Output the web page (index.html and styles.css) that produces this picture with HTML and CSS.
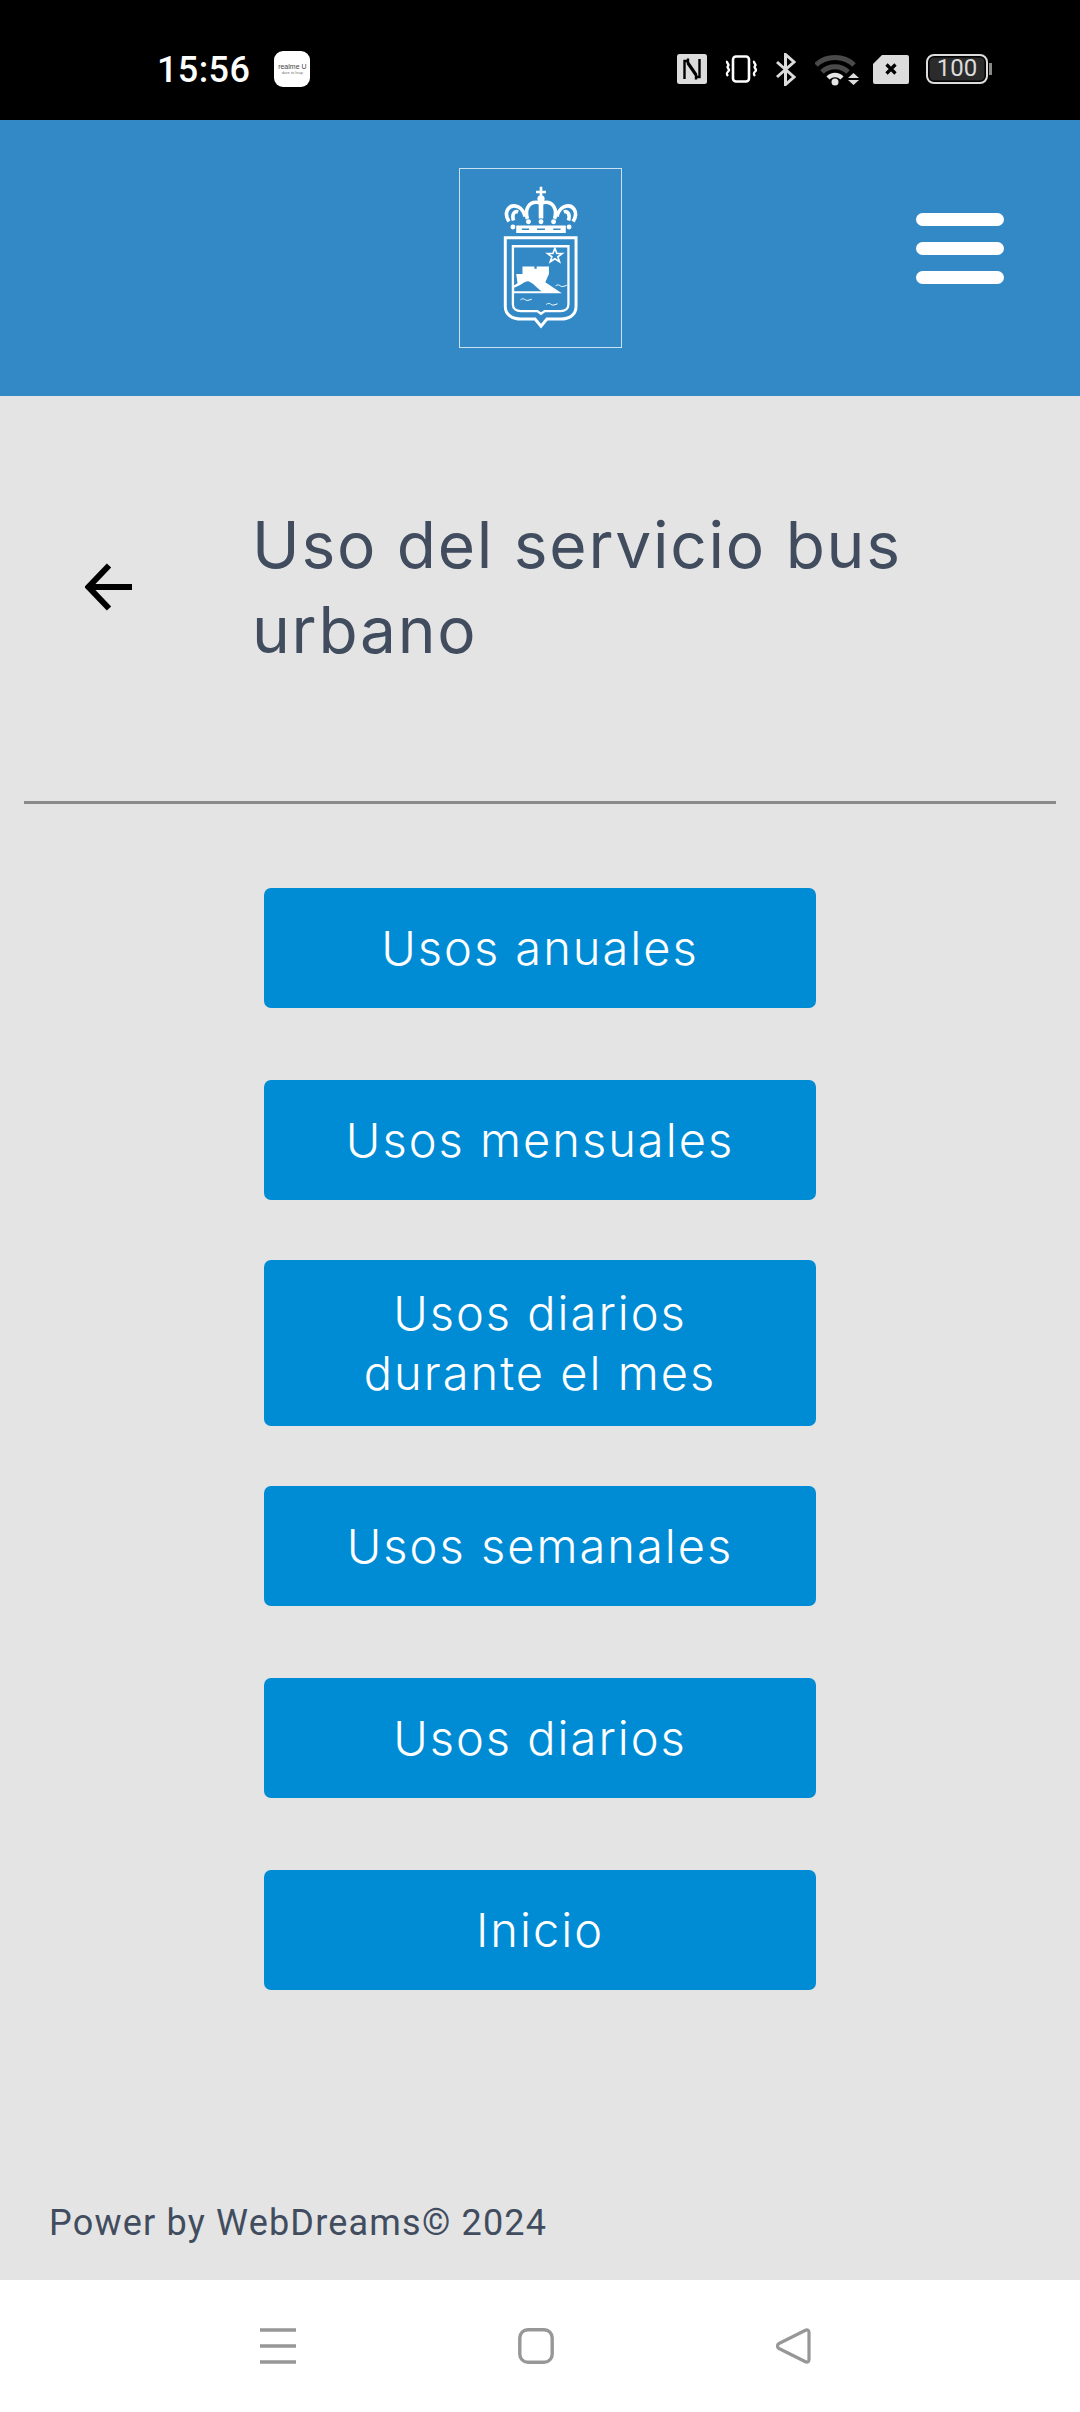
FILE: index.html
```html
<!DOCTYPE html>
<html lang="es">
<head>
<meta charset="utf-8">
<title>Uso del servicio bus urbano</title>
<link rel="stylesheet" href="styles.css">
</head>
<body>
<div class="app">
  <div class="statusbar">
    <div class="status-left">
      <span class="time">15:56</span>
      <span class="app-badge"><span class="badge-name">realme U</span><span class="badge-sub">dare to leap</span></span>
    </div>
    <div class="status-right">
      <svg class="s-nfc" width="30" height="30" viewBox="0 0 30 30"><rect width="30" height="30" rx="2.500" fill="#dcdcdc"/><path d="M7.500 25V7h2.500l9 13v5.500M22.500 5v18h-2.500l-9-13V4.500" fill="none" stroke="#000" stroke-width="2.400"/></svg>
      <svg class="s-vib" width="32" height="28" viewBox="0 0 32 28"><rect x="8" y="1.500" width="16" height="25" rx="3" fill="none" stroke="#fff" stroke-width="2.600"/><path d="M2.500 6c-2 2 2.500 3 .5 5s2.500 3 .5 5-2.500 3-.5 5M29.500 6c-2 2 2.500 3 .5 5s2.500 3 .5 5-2.500 3-.5 5" fill="none" stroke="#fff" stroke-width="2.400"/></svg>
      <svg class="s-bt" width="21" height="33" viewBox="0 0 21 33"><path d="M2 9l17 15-8.500 7.500V1.500L19 9 2 24" fill="none" stroke="#dcdcdc" stroke-width="3"/></svg>
      <svg class="s-wifi" width="45" height="33" viewBox="0 0 45 33"><path d="M1 12C11 2 29 2 39 12" fill="none" stroke="#4a4a4a" stroke-width="5"/><path d="M7 19c7-7 19-7 26 0" fill="none" stroke="#4a4a4a" stroke-width="5"/><path d="M13 25c4-4 10-4 14 0" fill="none" stroke="#e6e6e6" stroke-width="4.500"/><circle cx="20" cy="29" r="3.500" fill="#e6e6e6"/><path d="M33 25l5.500-5 5.500 5zM33 27h11l-5.500 5z" fill="#dcdcdc"/></svg>
      <svg class="s-sim" width="36" height="29" viewBox="0 0 36 29"><path d="M9 0h25a2 2 0 0 1 2 2v25a2 2 0 0 1-2 2H2a2 2 0 0 1-2-2V9z" fill="#dcdcdc"/><path d="M13.500 9.500l9 9M22.500 9.500l-9 9" stroke="#000" stroke-width="3.200"/></svg>
      <span class="battery"><span class="battery-level">100</span></span>
    </div>
  </div>

  <header class="topbar">
    <div class="logo">
      <svg width="161" height="178" viewBox="0 0 487 537">
        <g transform="translate(-58 -55)">
          <path d="M303 108v30M288 124h30" stroke="#fff" stroke-width="8" fill="none"/>
          <circle cx="303" cy="145" r="11" fill="#fff"/>
          <path d="M206 213c-18-28 0-56 28-44 14 6 20 22 20 30M220 210c-6-18 2-30 14-26" fill="none" stroke="#fff" stroke-width="11"/>
          <path d="M400 213c18-28 0-56-28-44-14 6-20 22-20 30M386 210c6-18-2-30-14-26" fill="none" stroke="#fff" stroke-width="11"/>
          <path d="M262 205c-10-30 6-50 26-50 8 0 15 4 15 4s7-4 15-4c20 0 36 20 26 50" fill="none" stroke="#fff" stroke-width="11"/>
          <path d="M296 160h14v44h-14z" fill="#fff"/>
          <circle cx="265" cy="214" r="7.500" fill="#fff"/><circle cx="303" cy="214" r="7.500" fill="#fff"/><circle cx="341" cy="214" r="7.500" fill="#fff"/>
          <circle cx="218" cy="230" r="7.500" fill="#fff"/><circle cx="388" cy="230" r="7.500" fill="#fff"/>
          <path d="M228 225h150v23H228z" fill="#fff"/>
          <path d="M245 234h22v5h-22zM291 234h24v5h-24zM340 234h22v5h-22z" fill="#3389c6"/>
          <path d="M195 262h214v208c0 26-22 38-46 38h-42l-18 22-18-22h-42c-26 0-48-12-48-38z" fill="none" stroke="#fff" stroke-width="9"/>
          <path d="M218 288h168v176c0 12-10 20-24 20h-48l-11 8-11-8h-50c-14 0-24-8-24-20z" fill="none" stroke="#fff" stroke-width="7"/>
          <path d="M345 294l6 16h16l-13 10 5 15-14-9-14 9 5-15-13-10h16z" fill="none" stroke="#fff" stroke-width="5"/>
          <path d="M247 349h36v7h7v-7h37v23l-11 25 50 33H218v-22l14-8-4-28h19z" fill="#fff"/>
          <path d="M222 413c16-4 28-17 40-19 13 0 28 21 43 30h-83z" fill="#3389c6"/>
          <path d="M347 408c10-8 14 2 20 2 4 0 8-2 14-4M241 450c10-8 14 2 20 2 4 0 8-2 14-4M319 464c10-8 14 2 20 2 4 0 8-2 14-4" fill="none" stroke="#fff" stroke-width="3"/>
        </g>
      </svg>
    </div>
    <button class="menu" type="button" aria-label="Menú"><span></span><span></span><span></span></button>
  </header>

  <main class="content">
    <div class="title-row">
      <svg class="back" width="47" height="48" viewBox="0 0 47 48"><path d="M24 2.500L3.500 24 24 45.500M4 24h43" fill="none" stroke="#000" stroke-width="6"/></svg>
      <h1 class="title">Uso del servicio bus urbano</h1>
    </div>
    <hr class="divider">
    <nav class="actions">
      <a class="btn btn-a">Usos anuales</a>
      <a class="btn btn-a">Usos mensuales</a>
      <a class="btn btn-tall">Usos diarios<br>durante el mes</a>
      <a class="btn btn-b">Usos semanales</a>
      <a class="btn btn-a">Usos diarios</a>
      <a class="btn btn-a">Inicio</a>
    </nav>
    <footer class="powered">Power by WebDreams© 2024</footer>
  </main>

  <div class="navbar">
    <svg width="36" height="36" viewBox="0 0 36 36"><path d="M0 2h36M0 18h36M0 34h36" stroke="#979797" stroke-width="3.500"/></svg>
    <svg width="36" height="36" viewBox="0 0 36 36"><rect x="1.800" y="1.800" width="32.400" height="32.400" rx="8" fill="none" stroke="#979797" stroke-width="3.400"/></svg>
    <svg width="35" height="36" viewBox="0 0 35 36"><path d="M3 15.500L29 2.500c2.500-1.300 4-.3 4 2v27c0 2.300-1.500 3.300-4 2L3 20.500c-2-1.100-2-3.900 0-5z" fill="none" stroke="#979797" stroke-width="3.200"/></svg>
  </div>
</div>
</body>
</html>
```
FILE: styles.css
```css
* { box-sizing: border-box; }
html, body { margin: 0; padding: 0; }
body { width: 1080px; height: 2412px; font-family: "Inter", "Liberation Sans", sans-serif; overflow: hidden; }
.app { display: flex; flex-direction: column; height: 2412px; background: #e4e4e4; }

.statusbar { height: 120px; background: #000; display: flex; justify-content: space-between; align-items: flex-start; padding: 51px 88px 0 157px; color: #fff; }
.status-left { display: flex; align-items: center; gap: 24px; height: 36px; }
.time { font-family: "Roboto", sans-serif; font-weight: 500; font-size: 36px; line-height: 38px; letter-spacing: 0.4px; padding-top: 2px; }
.app-badge { width: 36px; height: 36px; background: #fff; border-radius: 9px; display: flex; flex-direction: column; align-items: center; justify-content: center; color: #444; font-family: "Liberation Sans", sans-serif; white-space: nowrap; overflow: hidden; }
.badge-name { font-size: 7px; line-height: 7px; }
.badge-sub { font-size: 4px; line-height: 5px; color: #777; }
.status-right { display: flex; align-items: center; height: 36px; gap: 18px; }
.s-sim { margin-left: -5px; }
.s-wifi { margin-left: 1px; }
.battery { width: 66px; height: 30px; display: flex; align-items: center; margin-left: -1px; }
.battery-level { width: 62px; height: 30px; border: 2.500px solid #dcdcdc; border-radius: 8px; background: #2b2b2b; box-shadow: inset 0 0 0 1.500px #000; color: #dcdcdc; font-family: "Roboto", sans-serif; font-size: 24px; line-height: 25px; text-align: center; }
.battery::after { content: ""; width: 3px; height: 12px; background: #888; margin-left: 1px; }

.topbar { height: 276px; background: #3389c6; display: flex; align-items: flex-start; }
.logo { width: 163px; height: 180px; margin: 48px 0 0 459px; border: 1px solid rgba(255,255,255,.75); }
.logo svg { display: block; }
.menu { margin: 93px 0 0 294px; padding: 0; width: 88px; background: none; border: 0; display: flex; flex-direction: column; gap: 16px; }
.menu span { display: block; height: 13px; border-radius: 7px; background: #fff; }

.content { flex: 1; display: flex; flex-direction: column; min-height: 0; }
.title-row { height: 405px; padding: 106px 24px 0 85px; display: flex; align-items: flex-start; }
.back { flex: none; margin-top: 61px; }
.title { margin: 0 0 0 120px; font-weight: 400; font-size: 64px; line-height: 85px; letter-spacing: 1.750px; color: #414d5e; width: 720px; }
.divider { margin: 0 24px; border: 0; height: 3px; background: #8a8a8a; }
.actions { display: flex; flex-direction: column; align-items: center; padding-top: 84px; }
.btn { width: 552px; height: 120px; background: #008cd5; color: #fff; border-radius: 7px; display: flex; align-items: center; justify-content: center; text-align: center; font-weight: 300; font-size: 47px; line-height: 60px; letter-spacing: 2px; margin-bottom: 72px; }
.btn-a:nth-child(2) { margin-bottom: 60px; }
.btn-tall { height: 166px; margin-bottom: 60px; }
.powered { margin-top: auto; padding: 0 0 37px 49px; font-family: "Roboto", sans-serif; font-size: 36px; line-height: 40px; letter-spacing: 1.200px; color: #414d5e; }

.navbar { height: 132px; background: #fff; display: flex; align-items: flex-start; gap: 222px; padding: 48px 0 0 260px; }
```
